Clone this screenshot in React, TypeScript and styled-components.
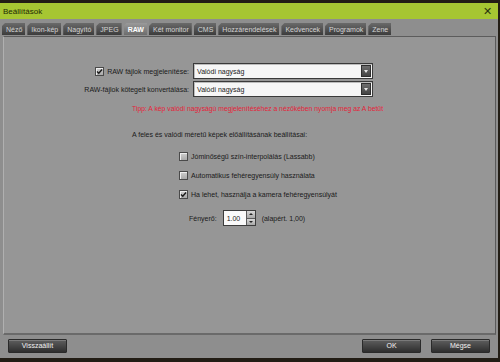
import React from "react";
import styled, { createGlobalStyle, css } from "styled-components";

const GlobalStyle = createGlobalStyle`
  html, body {
    margin: 0;
    padding: 0;
    background: #221d15;
  }
  body {
    font-family: "Liberation Sans", Arial, sans-serif;
    font-size: 7px;
    color: #1a1a1a;
  }
`;

const Window = styled.div`
  margin-top: 3px;
  width: 498px;
  height: 355px;
  display: flex;
  flex-direction: column;
  background: #8e8e8e;
  overflow: hidden;
`;

const TitleBar = styled.div`
  height: 16px;
  flex-shrink: 0;
  display: flex;
  align-items: center;
  justify-content: space-between;
  padding: 0 6px 0 3px;
  background: #a6c632;
  color: #1e2a05;
  font-size: 8px;
`;

const CloseGlyph = styled.span`
  font-size: 11px;
  color: #2a3510;
  line-height: 1;
`;

const TabBar = styled.div`
  display: flex;
  align-items: flex-end;
  gap: 2px;
  height: 16px;
  padding: 0 0 0 2px;
  flex-shrink: 0;
`;

const Tab = styled.div<{ $active?: boolean }>`
  height: 12px;
  padding: 0 3px 0 4px;
  display: flex;
  align-items: center;
  color: #d4d4d4;
  font-size: 7px;
  clip-path: polygon(3px 0, 100% 0, 100% 100%, 0 100%, 0 3px);
  background: linear-gradient(#6a6a6a, #3c3c3c);
  ${(p) =>
    p.$active &&
    css`
      background: linear-gradient(#9a9a9a, #6c6c6c);
      color: #ffffff;
      font-weight: bold;
    `}
`;

const Panel = styled.div`
  flex: 1;
  margin: 1px 2px 0 3px;
  background: #969696;
  border-top: 1px solid #5c5c5c;
  border-left: 1px solid #b0b0b0;
  border-right: 1px solid #5a5a5a;
  border-bottom: 2px solid #6a6a6a;
  padding-top: 26px;
  display: flex;
  flex-direction: column;
`;

const FormGrid = styled.div`
  display: grid;
  grid-template-columns: 124px 180px;
  column-gap: 4px;
  row-gap: 2px;
  margin-left: 61px;
`;

const FieldLabel = styled.label`
  display: flex;
  align-items: center;
  justify-content: flex-end;
  gap: 3px;
  height: 16px;
  white-space: nowrap;
`;

const Select = styled.div`
  height: 16px;
  box-sizing: border-box;
  display: flex;
  align-items: center;
  background: #f6f6f6;
  border: 1px solid #3a3a3a;
  box-shadow: inset 1px 1px 0 #bdbdbd;
  padding-left: 3px;
`;

const SelectText = styled.span`
  flex: 1;
`;

const SelectButton = styled.div`
  width: 10px;
  height: 12px;
  margin-right: 1px;
  display: flex;
  align-items: center;
  justify-content: center;
  background: linear-gradient(#6e6e6e, #444);
  border: 1px solid #2f2f2f;
  box-sizing: border-box;
`;

const Arrow = styled.span`
  width: 0;
  height: 0;
  border-left: 2.5px solid transparent;
  border-right: 2.5px solid transparent;
  border-top: 3px solid #e6e6e6;
`;

const Tip = styled.div`
  margin: 8px 0 0 128px;
  color: #e4243a;
  font-size: 6.8px;
  white-space: nowrap;
`;

const SectionTitle = styled.div`
  margin: 19px 0 0 128px;
  white-space: nowrap;
`;

const OptionList = styled.div`
  display: flex;
  flex-direction: column;
  gap: 9px;
  margin: 13px 0 0 175px;
`;

const OptionRow = styled.label`
  display: flex;
  align-items: center;
  gap: 3px;
  height: 10px;
  white-space: nowrap;
`;

const Box = styled.span`
  width: 9px;
  height: 9px;
  box-sizing: border-box;
  display: inline-flex;
  align-items: center;
  justify-content: center;
  background: linear-gradient(#cfcfcf, #a9a9a9);
  border: 1px solid #4a4a4a;
  box-shadow: inset 1px 1px 0 #eee;
  flex-shrink: 0;
`;

const Check = () => (
  <svg width="7" height="7" viewBox="0 0 7 7">
    <path d="M1 3.5 L2.8 5.3 L6 1.5" fill="none" stroke="#1a1a1a" strokeWidth="1.4" />
  </svg>
);

const Checkbox: React.FC<{ checked?: boolean }> = ({ checked }) => (
  <Box>{checked && <Check />}</Box>
);

const SpinRow = styled.div`
  display: flex;
  align-items: center;
  gap: 6px;
  margin: 11px 0 0 185px;
  white-space: nowrap;
`;

const SpinBox = styled.div`
  display: flex;
  align-items: stretch;
  width: 33px;
  height: 16px;
  box-sizing: border-box;
  border: 1px solid #3c3c3c;
  background: #fafafa;
`;

const SpinValue = styled.span`
  flex: 1;
  display: flex;
  align-items: center;
  padding-left: 3px;
`;

const SpinButtons = styled.div`
  width: 8px;
  display: flex;
  flex-direction: column;
  border-left: 1px solid #5a5a5a;
`;

const SpinButton = styled.div<{ $down?: boolean }>`
  flex: 1;
  display: flex;
  align-items: center;
  justify-content: center;
  background: linear-gradient(#d8d8d8, #a8a8a8);
  ${(p) => p.$down && css`border-top: 1px solid #5a5a5a;`}
  &::after {
    content: "";
    border-left: 2px solid transparent;
    border-right: 2px solid transparent;
    ${(p) =>
      p.$down
        ? css`border-top: 2px solid #222;`
        : css`border-bottom: 2px solid #222;`}
  }
`;

const Footer = styled.div`
  height: 21px;
  flex-shrink: 0;
  display: flex;
  align-items: center;
  padding: 0 8px 2px 8px;
  gap: 10px;
`;

const Spacer = styled.div`
  flex: 1;
`;

const Button = styled.div`
  width: 59px;
  height: 14px;
  box-sizing: border-box;
  display: flex;
  align-items: center;
  justify-content: center;
  color: #f2f2f2;
  font-size: 7px;
  background: linear-gradient(#5e5e5e, #2e2e2e);
  border: 1px solid #2a2a2a;
  box-shadow: inset 0 1px 0 #7a7a7a;
  border-radius: 1px;
`;

const tabs = [
  "Néző",
  "Ikon-kép",
  "Nagyító",
  "JPEG",
  "RAW",
  "Két monitor",
  "CMS",
  "Hozzárendelések",
  "Kedvencek",
  "Programok",
  "Zene",
];

export default function App() {
  return (
    <>
      <GlobalStyle />
      <Window>
        <TitleBar>
          <span>Beállítások</span>
          <CloseGlyph>✕</CloseGlyph>
        </TitleBar>

        <TabBar>
          {tabs.map((t) => (
            <Tab key={t} $active={t === "RAW"}>
              {t}
            </Tab>
          ))}
        </TabBar>

        <Panel>
          <FormGrid>
            <FieldLabel>
              <Checkbox checked />
              RAW fájlok megjelenítése:
            </FieldLabel>
            <Select>
              <SelectText>Valódi nagyság</SelectText>
              <SelectButton>
                <Arrow />
              </SelectButton>
            </Select>
            <FieldLabel>RAW-fájlok kötegelt konvertálása:</FieldLabel>
            <Select>
              <SelectText>Valódi nagyság</SelectText>
              <SelectButton>
                <Arrow />
              </SelectButton>
            </Select>
          </FormGrid>

          <Tip>Tipp: A kép valódi nagyságú megjelenítéséhez a nézőkében nyomja meg az A betűt</Tip>

          <SectionTitle>A feles és valódi méretű képek előállításának beállításai:</SectionTitle>

          <OptionList>
            <OptionRow>
              <Checkbox />
              Jóminőségű szín-interpolálás (Lassabb)
            </OptionRow>
            <OptionRow>
              <Checkbox />
              Automatikus fehéregyensúly használata
            </OptionRow>
            <OptionRow>
              <Checkbox checked />
              Ha lehet, használja a kamera fehéregyensúlyát
            </OptionRow>
          </OptionList>

          <SpinRow>
            <span>Fényerő:</span>
            <SpinBox>
              <SpinValue>1.00</SpinValue>
              <SpinButtons>
                <SpinButton />
                <SpinButton $down />
              </SpinButtons>
            </SpinBox>
            <span>(alapért. 1,00)</span>
          </SpinRow>
        </Panel>

        <Footer>
          <Button>Visszaállít</Button>
          <Spacer />
          <Button>OK</Button>
          <Button>Mégse</Button>
        </Footer>
      </Window>
    </>
  );
}
